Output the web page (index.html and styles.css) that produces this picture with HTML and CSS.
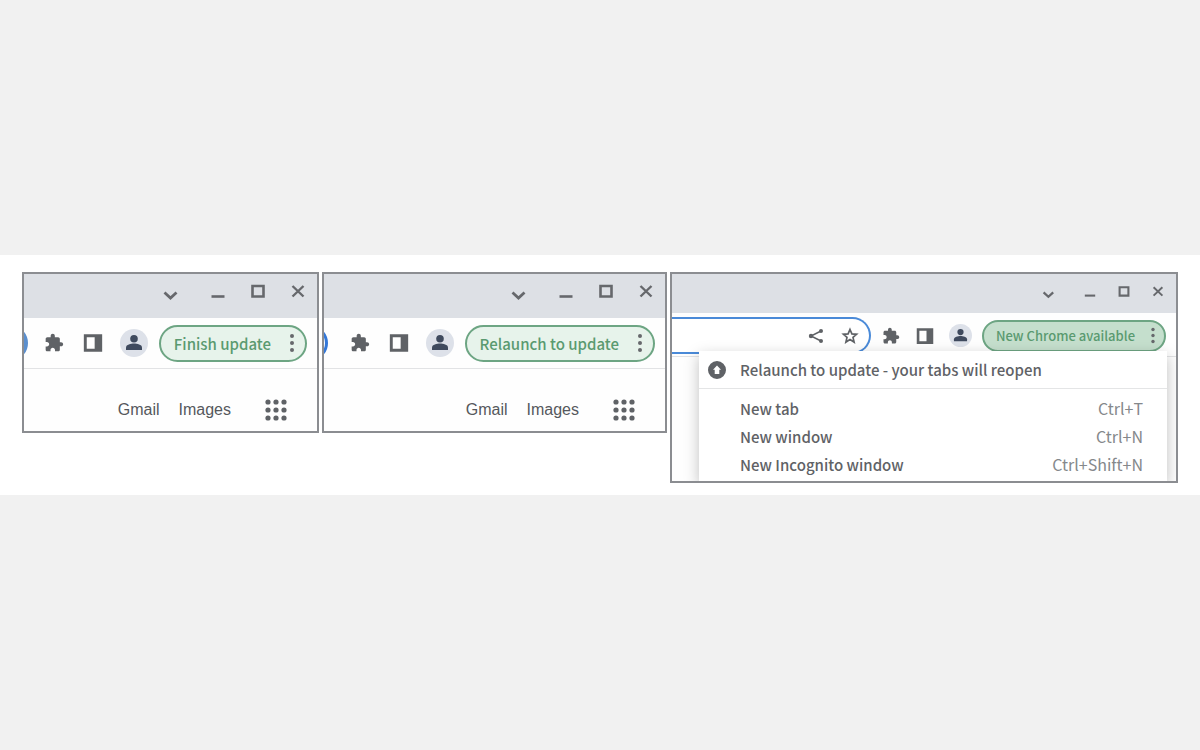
FILE: index.html
```html
<!DOCTYPE html>
<html lang="en">
	<head>
		<meta charset="UTF-8">
		<title>Chrome update button</title>
		<link rel="stylesheet" href="styles.css">
	</head>
	<body>
		<svg class="defs" aria-hidden="true">
			<symbol id="down" viewBox="0 0 20 20"><path d="M4.500 10.500l6 5.500 6-5.500" fill="none" stroke="currentColor" stroke-width="2.800"/></symbol>
			<symbol id="min" viewBox="0 0 20 20"><path d="M3.500 14.500h13" fill="none" stroke="currentColor" stroke-width="2.600"/></symbol>
			<symbol id="max" viewBox="0 0 20 20"><path d="M4.500 4h11v10.500h-11z" fill="none" stroke="currentColor" stroke-width="2.600"/></symbol>
			<symbol id="close" viewBox="0 0 20 20"><path d="M4.500 4l11 10.500M15.500 4l-11 10.500" fill="none" stroke="currentColor" stroke-width="2.400"/></symbol>
			<symbol id="puzzle" viewBox="0 0 24 24"><path d="M20.500 11H19V7c0-1.100-.9-2-2-2h-4V3.500C13 2.120 11.880 1 10.500 1S8 2.120 8 3.500V5H4c-1.100 0-1.990.9-1.990 2v3.800H3.500c1.490 0 2.700 1.210 2.700 2.700s-1.210 2.700-2.700 2.700H2V20c0 1.100.9 2 2 2h3.800v-1.500c0-1.490 1.210-2.700 2.700-2.700s2.700 1.210 2.700 2.700V22H17c1.100 0 2-.9 2-2v-4h1.500c1.380 0 2.500-1.120 2.500-2.500S21.880 11 20.500 11z" fill="currentColor"/></symbol>
			<symbol id="side" viewBox="0 0 24 24"><path d="M1 1.500h22v21H1zM4.500 5v14H14V5z" fill="currentColor" fill-rule="evenodd"/></symbol>
			<symbol id="person" viewBox="0 0 28 28"><circle cx="14" cy="14" r="14" fill="#dde1e9"/><circle cx="14" cy="9.800" r="3.800" fill="currentColor"/><path d="M6 21v-2.500c0-3 5-4 8-4s8 1 8 4V21z" fill="currentColor"/></symbol>
			<symbol id="dots" viewBox="0 0 6 20"><circle cx="3" cy="3" r="2" fill="currentColor"/><circle cx="3" cy="10" r="2" fill="currentColor"/><circle cx="3" cy="17" r="2" fill="currentColor"/></symbol>
			<symbol id="apps" viewBox="0 0 22 22"><g fill="currentColor"><circle cx="3" cy="3" r="2.600"/><circle cx="11" cy="3" r="2.600"/><circle cx="19" cy="3" r="2.600"/><circle cx="3" cy="11" r="2.600"/><circle cx="11" cy="11" r="2.600"/><circle cx="19" cy="11" r="2.600"/><circle cx="3" cy="19" r="2.600"/><circle cx="11" cy="19" r="2.600"/><circle cx="19" cy="19" r="2.600"/></g></symbol>
			<symbol id="share" viewBox="0 0 18 18"><path d="M14 4L4 9l10 5" fill="none" stroke="currentColor" stroke-width="1.500"/><g fill="currentColor"><circle cx="14" cy="4" r="2"/><circle cx="4" cy="9" r="2.200"/><circle cx="14" cy="14" r="2"/></g></symbol>
			<symbol id="star" viewBox="0 0 18 18"><path d="M9 2.500l1.900 4.400 4.700.4-3.600 3.100 1.100 4.700L9 12.600l-4.100 2.500L6 10.400 2.400 7.300l4.700-.4z" fill="none" stroke="currentColor" stroke-width="1.700"/></symbol>
			<symbol id="update" viewBox="0 0 18 18"><path d="M9 0a9 9 0 1 0 0 18A9 9 0 0 0 9 0zM9 4.500l4 4.300h-1.700V13H6.700V8.800H5z" fill="currentColor" fill-rule="evenodd"/></symbol>
		</svg>
		<main class="strip">
			<section class="window">
				<div class="titlebar">
					<button class="more" aria-label="Search tabs"><svg><use href="#down"/></svg></button>
					<button aria-label="Minimize"><svg><use href="#min"/></svg></button>
					<button aria-label="Maximize"><svg><use href="#max"/></svg></button>
					<button aria-label="Close"><svg><use href="#close"/></svg></button>
				</div>
				<div class="toolbar">
					<span class="edge filled"></span>
					<div class="icons">
						<button aria-label="Extensions"><svg><use href="#puzzle"/></svg></button>
						<button aria-label="Side panel"><svg><use href="#side"/></svg></button>
						<button class="avatar" aria-label="Profile"><svg><use href="#person"/></svg></button>
					</div>
					<button class="pill">Finish update <svg><use href="#dots"/></svg></button>
				</div>
				<nav class="links">
					<a href="#">Gmail</a>
					<a href="#">Images</a>
					<button aria-label="Apps"><svg><use href="#apps"/></svg></button>
				</nav>
			</section>
			<section class="window">
				<div class="titlebar">
					<button class="more" aria-label="Search tabs"><svg><use href="#down"/></svg></button>
					<button aria-label="Minimize"><svg><use href="#min"/></svg></button>
					<button aria-label="Maximize"><svg><use href="#max"/></svg></button>
					<button aria-label="Close"><svg><use href="#close"/></svg></button>
				</div>
				<div class="toolbar">
					<span class="edge"></span>
					<div class="icons">
						<button aria-label="Extensions"><svg><use href="#puzzle"/></svg></button>
						<button aria-label="Side panel"><svg><use href="#side"/></svg></button>
						<button class="avatar" aria-label="Profile"><svg><use href="#person"/></svg></button>
					</div>
					<button class="pill">Relaunch to update <svg><use href="#dots"/></svg></button>
				</div>
				<nav class="links">
					<a href="#">Gmail</a>
					<a href="#">Images</a>
					<button aria-label="Apps"><svg><use href="#apps"/></svg></button>
				</nav>
			</section>
			<section class="window small">
				<div class="titlebar">
					<button class="more" aria-label="Search tabs"><svg><use href="#down"/></svg></button>
					<button aria-label="Minimize"><svg><use href="#min"/></svg></button>
					<button aria-label="Maximize"><svg><use href="#max"/></svg></button>
					<button aria-label="Close"><svg><use href="#close"/></svg></button>
				</div>
				<div class="toolbar">
					<div class="omnibox">
						<input type="text" aria-label="Address">
						<button aria-label="Share"><svg><use href="#share"/></svg></button>
						<button aria-label="Bookmark"><svg><use href="#star"/></svg></button>
					</div>
					<div class="icons">
						<button aria-label="Extensions"><svg><use href="#puzzle"/></svg></button>
						<button aria-label="Side panel"><svg><use href="#side"/></svg></button>
						<button class="avatar" aria-label="Profile"><svg><use href="#person"/></svg></button>
					</div>
					<button class="pill">New Chrome available <svg><use href="#dots"/></svg></button>
				</div>
				<div class="menu">
					<button class="item first"><svg><use href="#update"/></svg><span>Relaunch to update - your tabs will reopen</span></button>
					<div class="group">
						<button class="item"><span>New tab</span><kbd>Ctrl+T</kbd></button>
						<button class="item"><span>New window</span><kbd>Ctrl+N</kbd></button>
						<button class="item"><span>New Incognito window</span><kbd>Ctrl+Shift+N</kbd></button>
					</div>
				</div>
			</section>
		</main>
	</body>
</html>
```
FILE: styles.css
```css
*{
	box-sizing: border-box;
}
body{
	margin: 0;
	min-height: 100vh;
	display: flex;
	flex-direction: column;
	justify-content: center;
	background: #f1f1f1;
	font-family: "Noto Sans CJK JP", "Noto Sans", sans-serif;
	font-size: 16px;
	color: #5f6266;
}
button{
	display: flex;
	align-items: center;
	justify-content: center;
	padding: 0;
	border: 0;
	background: none;
	font: inherit;
	color: inherit;
	white-space: nowrap;
}
svg{
	display: block;
	flex: none;
	width: 20px;
	height: 20px;
}
.defs{
	display: none;
}
.strip{
	display: grid;
	grid-template-columns: 297fr 345fr 508fr;
	align-items: start;
	gap: 3px;
	padding: 17px 22px 12px;
	background: #fff;
}
.window{
	min-width: 0;
	overflow: hidden;
	border: 2px solid #8b8d91;
	background: #fefefe;
}
.titlebar{
	display: flex;
	align-items: center;
	justify-content: flex-end;
	gap: 20px;
	height: 44px;
	padding: 0 9px 8px;
	background: #dde0e5;
	color: #66686c;
}
.titlebar .more{
	margin-right: 8px;
}
.toolbar{
	display: flex;
	align-items: center;
	gap: 11px;
	height: 51px;
	padding-right: 10px;
	border-bottom: 1px solid #e2e3e5;
}
/* tail end of an address bar that runs out of the window */
.edge{
	flex: none;
	width: 36px;
	height: 36px;
	margin-left: -32px;
	margin-right: auto;
	border: 3px solid #3478d8;
	border-radius: 18px;
}
.filled{
	background: #5b8fce;
	border-color: #5b8fce;
}
.icons{
	display: flex;
	align-items: center;
	gap: 15px;
}
.icons button{
	width: 24px;
}
.icons .avatar,
.avatar svg{
	width: 28px;
	height: 28px;
	color: #3f4a5e;
}
.pill{
	gap: 18px;
	height: 37px;
	padding: 0 10px 0 13px;
	border: 2px solid #6da583;
	border-radius: 19px;
	background: #e7f3eb;
	color: #5a9a70;
	font-size: 15px;
	font-weight: 500;
}
.pill svg{
	width: 6px;
	color: #66686c;
}
.links{
	display: flex;
	align-items: center;
	justify-content: flex-end;
	gap: 19px;
	padding: 35px 30px 15px;
	font-family: "Liberation Sans", Arial, sans-serif;
	line-height: 12px;
}
.links a{
	color: #55585c;
	text-decoration: none;
}
.links button{
	height: 12px;
	margin-left: 15px;
}
.links svg{
	width: 22px;
	height: 22px;
}

.small .titlebar{
	gap: 18px;
	height: 39px;
	padding: 0 10px 4px;
}
.small .titlebar svg{
	width: 16px;
	height: 16px;
}
.small .toolbar{
	gap: 10px;
	height: 44px;
	padding-top: 2px;
}
.omnibox{
	flex: 1;
	display: flex;
	align-items: center;
	gap: 16px;
	min-width: 0;
	height: 37px;
	padding-right: 10px;
	border: 2px solid #4a8ad8;
	border-left: 0;
	border-radius: 0 19px 19px 0;
	background: #fff;
}
.omnibox input{
	flex: 1;
	min-width: 0;
	border: 0;
	outline: 0;
	background: none;
	font: inherit;
}
.omnibox svg{
	width: 18px;
	height: 18px;
}
.small .icons{
	gap: 14px;
}
.small .icons button{
	width: 20px;
}
.small .icons svg{
	width: 18px;
	height: 18px;
}
.small .icons .avatar,
.small .avatar svg{
	width: 23px;
	height: 23px;
}
.small .pill{
	gap: 15px;
	height: 32px;
	padding: 0 8px 0 12px;
	background: #c5dfcd;
	font-size: 13px;
}
.small .pill svg{
	height: 17px;
}
.menu{
	position: relative;
	margin: -6px 9px 0 27px;
	background: #fff;
	box-shadow: 0 5px 14px rgba(0, 0, 0, .25);
}
.item{
	width: 100%;
	height: 28px;
	padding: 0 24px 0 41px;
	justify-content: space-between;
	font-size: 15px;
	font-weight: 500;
}
.first{
	justify-content: flex-start;
	gap: 14px;
	height: 37px;
	padding-left: 9px;
}
.first svg{
	width: 18px;
	height: 18px;
}
.group{
	padding: 5px 0 3px;
	border-top: 1px solid #e4e5e6;
}
kbd{
	font-family: inherit;
	font-size: 16px;
	font-weight: 400;
	color: #85888b;
}
```
